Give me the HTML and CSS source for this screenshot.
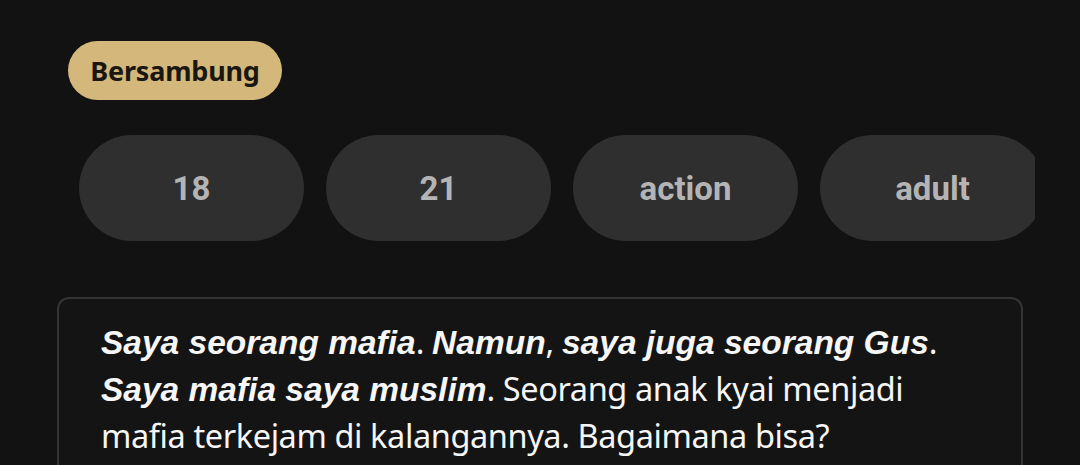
FILE: index.html
```html
<!DOCTYPE html>
<html lang="id">
<head>
<meta charset="utf-8">
<title>Detail</title>
<link rel="stylesheet" href="styles.css">
</head>
<body>
<main class="page">
  <div class="status-row">
    <span class="status-badge">Bersambung</span>
  </div>
  <div class="tags">
    <span class="tag">18</span>
    <span class="tag">21</span>
    <span class="tag">action</span>
    <span class="tag">adult</span>
    <span class="tag">drama</span>
  </div>
  <section class="synopsis">
    <p><b>Saya seorang mafia</b>. <b>Namun</b>, <b>saya juga seorang Gus</b>. <b>Saya mafia saya muslim</b>. Seorang anak kyai menjadi mafia terkejam di kalangannya. Bagaimana bisa?</p>
  </section>
</main>
</body>
</html>
```
FILE: styles.css
```css
html, body {
  margin: 0;
  padding: 0;
  background: #121212;
}
.page {
  padding-top: 41px;
  height: 465px;
  box-sizing: border-box;
  overflow: hidden;
}
.status-row {
  display: flex;
  padding-left: 68px;
}
.status-badge {
  display: flex;
  align-items: center;
  justify-content: center;
  width: 214px;
  height: 59px;
  border-radius: 30px;
  background: #d4b87b;
  color: #1a1712;
  font-family: "Noto Sans", sans-serif;
  font-weight: 700;
  font-size: 27px;
  letter-spacing: -0.2px;
}
.tags {
  display: flex;
  gap: 22px;
  margin: 35px 0 0 79px;
  width: 956px;
  overflow: hidden;
}
.tag {
  flex: 0 0 225px;
  height: 106px;
  border-radius: 53px;
  background: #2f2f2f;
  color: #b4b4b4;
  display: flex;
  align-items: center;
  justify-content: center;
  font-family: Roboto, sans-serif;
  font-weight: 700;
  font-size: 33px;
}
.synopsis {
  margin: 56px 0 0 57px;
  width: 966px;
  box-sizing: border-box;
  border: 2px solid #343434;
  border-radius: 12px;
  background: #141414;
  padding: 20px 56px 20px 42px;
}
.synopsis p {
  margin: 0;
  color: #f6f6f6;
  font-family: "Noto Sans", sans-serif;
  font-size: 32.5px;
  line-height: 46px;
  letter-spacing: -0.4px;
}
.synopsis b {
  font-family: "Liberation Sans", Arial, sans-serif;
  font-style: italic;
  font-weight: 700;
  font-size: 33.5px;
  letter-spacing: 0;
}
```
